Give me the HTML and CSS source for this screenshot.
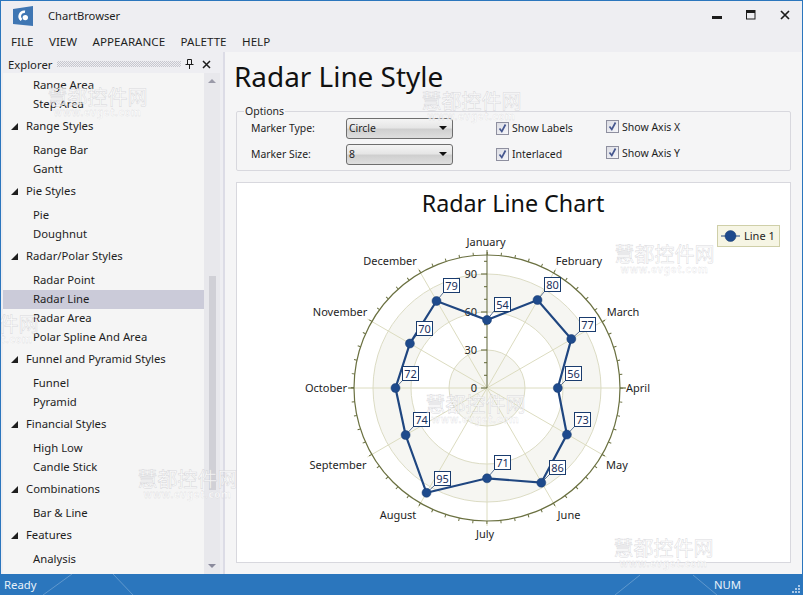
FILE: index.html
```html
<!DOCTYPE html>
<html lang="en">
<head>
    <meta charset="UTF-8">
    <title>ChartBrowser</title>
    <link rel="stylesheet" href="styles.css">
</head>
<body>
    <div class="window">
        <div class="titlebar">
            <svg class="app-icon" width="20" height="20" viewBox="0 0 20 20">
                <polygon points="0,3 20,0 20,20 0,18" fill="#3f76b3"/>
                <path d="M12 5.8 A4.6 4.6 0 0 0 8.5 14" fill="none" stroke="#fff" stroke-width="2.6"/>
                <circle cx="12.3" cy="11.6" r="2.7" fill="#fff"/>
            </svg>
            <span class="app-name">ChartBrowser</span>
            <div class="win-buttons">
                <svg width="10" height="10" viewBox="0 0 10 10"><rect x="0" y="6" width="10" height="3" fill="#1c1c1c"/></svg>
                <svg width="10" height="10" viewBox="0 0 10 10"><rect x="0.5" y="0.5" width="8.5" height="8.5" fill="none" stroke="#1c1c1c"/><rect x="0" y="0" width="9" height="3" fill="#1c1c1c"/></svg>
                <svg width="10" height="10" viewBox="0 0 10 10"><path d="M1 1 L9 9 M9 1 L1 9" stroke="#1c1c1c" stroke-width="1.7"/></svg>
            </div>
        </div>

        <div class="menubar">
            <span>FILE</span>
            <span>VIEW</span>
            <span>APPEARANCE</span>
            <span>PALETTE</span>
            <span>HELP</span>
        </div>

        <div class="content">
            <div class="sidebar">
                <div class="panel-head">
                    <span>Explorer</span>
                    <div class="grip"></div>
                    <svg width="9" height="10" viewBox="0 0 9 10"><path d="M2.5 .5 H6.5 V5.5 H2.5 Z M.5 5.5 H8.5 M4.5 5.5 V10" fill="none" stroke="#1c1c1c"/></svg>
                    <svg class="panel-close" width="9" height="9" viewBox="0 0 9 9"><path d="M1 1 L8 8 M8 1 L1 8" stroke="#1c1c1c" stroke-width="1.5"/></svg>
                </div>
                <div class="panel-body">
                    <ul class="tree">
                        <li>Range Area</li>
                        <li>Step Area</li>
                        <li class="group">Range Styles</li>
                        <li>Range Bar</li>
                        <li>Gantt</li>
                        <li class="group">Pie Styles</li>
                        <li>Pie</li>
                        <li>Doughnut</li>
                        <li class="group">Radar/Polar Styles</li>
                        <li>Radar Point</li>
                        <li class="selected">Radar Line</li>
                        <li>Radar Area</li>
                        <li>Polar Spline And Area</li>
                        <li class="group">Funnel and Pyramid Styles</li>
                        <li>Funnel</li>
                        <li>Pyramid</li>
                        <li class="group">Financial Styles</li>
                        <li>High Low</li>
                        <li>Candle Stick</li>
                        <li class="group">Combinations</li>
                        <li>Bar &amp; Line</li>
                        <li class="group">Features</li>
                        <li>Analysis</li>
                    </ul>
                    <div class="scrollbar">
                        <div class="arrow-up"></div>
                        <div class="thumb"></div>
                        <div class="arrow-down"></div>
                    </div>
                </div>
            </div>

            <div class="main">
                <h1>Radar Line Style</h1>
                <fieldset class="options">
                    <legend>Options</legend>
                    <div class="options-grid">
                        <label>Marker Type:</label>
                        <div class="combo">Circle</div>
                        <div class="check"><span class="box"><svg width="11" height="11" viewBox="0 0 11 11"><path d="M2.5 5.5 L4.8 8.5 L8.5 1.5" fill="none" stroke="#46578f" stroke-width="1.7"/></svg></span>Show Labels</div>
                        <div class="check raised"><span class="box"><svg width="11" height="11" viewBox="0 0 11 11"><path d="M2.5 5.5 L4.8 8.5 L8.5 1.5" fill="none" stroke="#46578f" stroke-width="1.7"/></svg></span>Show Axis X</div>
                        <label>Marker Size:</label>
                        <div class="combo">8</div>
                        <div class="check"><span class="box"><svg width="11" height="11" viewBox="0 0 11 11"><path d="M2.5 5.5 L4.8 8.5 L8.5 1.5" fill="none" stroke="#46578f" stroke-width="1.7"/></svg></span>Interlaced</div>
                        <div class="check raised"><span class="box"><svg width="11" height="11" viewBox="0 0 11 11"><path d="M2.5 5.5 L4.8 8.5 L8.5 1.5" fill="none" stroke="#46578f" stroke-width="1.7"/></svg></span>Show Axis Y</div>
                    </div>
                </fieldset>

                <div class="chart">
                    <svg class="radar" width="553" height="379" viewBox="237 183 553 379">
                        <text class="chart-title" x="513" y="212">Radar Line Chart</text>

                        <!-- legend -->
                        <rect class="legend-box" x="717.5" y="225.5" width="62" height="21"/>
                        <line class="series" x1="721" y1="236" x2="740" y2="236" stroke-width="1"/>
                        <circle class="marker" cx="730.5" cy="236" r="5.5"/>
                        <text class="axis-label" x="744" y="240" text-anchor="start">Line 1</text>

                        <!-- rings -->
                        <circle class="band" cx="487" cy="388" r="114"/>
                        <circle class="ring" cx="487" cy="388" r="76"/>
                        <circle class="band" cx="487" cy="388" r="38"/>

                        <!-- spokes -->
                        <g class="spoke">
                            <line x1="487" y1="388" x2="556" y2="268.5"/>
                            <line x1="487" y1="388" x2="606.5" y2="319"/>
                            <line x1="487" y1="388" x2="625" y2="388"/>
                            <line x1="487" y1="388" x2="606.5" y2="457"/>
                            <line x1="487" y1="388" x2="556" y2="507.5"/>
                            <line x1="487" y1="388" x2="487" y2="526"/>
                            <line x1="487" y1="388" x2="418" y2="507.5"/>
                            <line x1="487" y1="388" x2="367.5" y2="457"/>
                            <line x1="487" y1="388" x2="349" y2="388"/>
                            <line x1="487" y1="388" x2="367.5" y2="319"/>
                            <line x1="487" y1="388" x2="418" y2="268.5"/>
                        </g>

                        <!-- outer axis with ticks -->
                        <circle class="axis-ring" cx="487" cy="388" r="133"/>
                        <circle class="axis-ticks" cx="487" cy="388" r="134.5"/>
                        <g class="axis-y">
                            <line x1="487" y1="388" x2="487" y2="250"/>
                            <line x1="481" y1="388" x2="487" y2="388"/>
                            <line x1="484" y1="375.3" x2="487" y2="375.3"/>
                            <line x1="484" y1="362.7" x2="487" y2="362.7"/>
                            <line x1="481" y1="350" x2="487" y2="350"/>
                            <line x1="484" y1="337.3" x2="487" y2="337.3"/>
                            <line x1="484" y1="324.7" x2="487" y2="324.7"/>
                            <line x1="481" y1="312" x2="487" y2="312"/>
                            <line x1="484" y1="299.3" x2="487" y2="299.3"/>
                            <line x1="484" y1="286.7" x2="487" y2="286.7"/>
                            <line x1="481" y1="274" x2="487" y2="274"/>
                            <line x1="484" y1="261.3" x2="487" y2="261.3"/>
                            <line x1="620" y1="388" x2="626" y2="388"/>
                            <line x1="348" y1="388" x2="354" y2="388"/>
                        </g>

                        <g class="axis-y-labels">
                            <text x="477" y="392">0</text>
                            <text x="477" y="354">30</text>
                            <text x="477" y="316">60</text>
                            <text x="477" y="278">90</text>
                        </g>

                        <g class="month-labels">
                            <text x="486" y="246">January</text>
                            <text x="579" y="265">February</text>
                            <text x="623" y="316">March</text>
                            <text x="638" y="392">April</text>
                            <text x="617" y="469">May</text>
                            <text x="569" y="519">June</text>
                            <text x="485" y="538">July</text>
                            <text x="398" y="519">August</text>
                            <text x="338" y="469">September</text>
                            <text x="326" y="392">October</text>
                            <text x="340" y="316">November</text>
                            <text x="390" y="265">December</text>
                        </g>

                        <!-- series -->
                        <polygon class="series" stroke-width="2.2" points="487,320 537.5,300 571.3,339 557.8,388 566.9,434.6 541.3,482.7 487,478.3 426.5,492.8 405.6,435 395.5,388 409.9,343.5 436.5,301"/>
                        <g class="leaders">
                            <line x1="487" y1="320" x2="494" y2="311"/>
                            <line x1="537.5" y1="300" x2="544" y2="292"/>
                            <line x1="571.3" y1="339" x2="579" y2="332"/>
                            <line x1="557.8" y1="388" x2="565" y2="381"/>
                            <line x1="566.9" y1="434.6" x2="574" y2="427"/>
                            <line x1="541.3" y1="482.7" x2="549" y2="475"/>
                            <line x1="487" y1="478.3" x2="494" y2="470"/>
                            <line x1="426.5" y1="492.8" x2="434" y2="486"/>
                            <line x1="405.6" y1="435" x2="413" y2="427"/>
                            <line x1="395.5" y1="388" x2="402" y2="381"/>
                            <line x1="409.9" y1="343.5" x2="416" y2="336"/>
                            <line x1="436.5" y1="301" x2="443" y2="293"/>
                        </g>
                        <g class="markers">
                            <circle cx="487" cy="320" r="4.5"/>
                            <circle cx="537.5" cy="300" r="4.5"/>
                            <circle cx="571.3" cy="339" r="4.5"/>
                            <circle cx="557.8" cy="388" r="4.5"/>
                            <circle cx="566.9" cy="434.6" r="4.5"/>
                            <circle cx="541.3" cy="482.7" r="4.5"/>
                            <circle cx="487" cy="478.3" r="4.5"/>
                            <circle cx="426.5" cy="492.8" r="4.5"/>
                            <circle cx="405.6" cy="435" r="4.5"/>
                            <circle cx="395.5" cy="388" r="4.5"/>
                            <circle cx="409.9" cy="343.5" r="4.5"/>
                            <circle cx="436.5" cy="301" r="4.5"/>
                        </g>

                        <!-- data labels -->
                        <g class="tags">
                            <rect x="494.5" y="297.5" width="16" height="14"/><text x="502.5" y="308.5">54</text>
                            <rect x="544.5" y="277.5" width="16" height="14"/><text x="552.5" y="288.5">80</text>
                            <rect x="579.5" y="317.5" width="16" height="14"/><text x="587.5" y="328.5">77</text>
                            <rect x="565.5" y="366.5" width="16" height="14"/><text x="573.5" y="377.5">56</text>
                            <rect x="574.5" y="412.5" width="16" height="14"/><text x="582.5" y="423.5">73</text>
                            <rect x="549.5" y="460.5" width="16" height="14"/><text x="557.5" y="471.5">86</text>
                            <rect x="494.5" y="455.5" width="16" height="14"/><text x="502.5" y="466.5">71</text>
                            <rect x="434.5" y="471.5" width="16" height="14"/><text x="442.5" y="482.5">95</text>
                            <rect x="413.5" y="412.5" width="16" height="14"/><text x="421.5" y="423.5">74</text>
                            <rect x="402.5" y="366.5" width="16" height="14"/><text x="410.5" y="377.5">72</text>
                            <rect x="416.5" y="321.5" width="16" height="14"/><text x="424.5" y="332.5">70</text>
                            <rect x="443.5" y="278.5" width="16" height="14"/><text x="451.5" y="289.5">79</text>
                        </g>
                    </svg>
                </div>
            </div>
        </div>

        <div class="statusbar">
            <span>Ready</span>
            <span class="num">NUM</span>
            <svg class="size-grip" width="9" height="9" viewBox="0 0 9 9" fill="#a9c8e8">
                <rect x="7" y="1" width="2" height="2"/>
                <rect x="4" y="4" width="2" height="2"/><rect x="7" y="4" width="2" height="2"/>
                <rect x="1" y="7" width="2" height="2"/><rect x="4" y="7" width="2" height="2"/><rect x="7" y="7" width="2" height="2"/>
            </svg>
        </div>

        <!-- watermark stamped over the capture -->
        <svg class="streaks" width="803" height="595" viewBox="0 0 803 595">
            <path d="M72 574 L43 595 M113 574 L133 595 M640 575 L615 595 M693 575 L717 595"/>
        </svg>
        <div class="mark mark-a">慧都控件网<small>www.evget.com</small></div>
        <div class="mark mark-b">慧都控件网<small>www.evget.com</small></div>
        <div class="mark mark-c">慧都控件网<small>www.evget.com</small></div>
        <div class="mark mark-d">慧都控件网<small>www.evget.com</small></div>
        <div class="mark mark-e">慧都控件网<small>www.evget.com</small></div>
        <div class="mark mark-f">慧都控件网<small>www.evget.com</small></div>
        <div class="mark mark-g">慧都控件网<small>www.evget.com</small></div>
    </div>
</body>
</html>
```

FILE: styles.css
```css
* {
    box-sizing: border-box;
    margin: 0;
    padding: 0;
}

body {
    width: 803px;
    height: 595px;
    overflow: hidden;
    font-family: "Noto Sans", "Open Sans", sans-serif;
    font-size: 11.3px;
    color: #1e1e1e;
}

.window {
    position: relative;
    display: flex;
    flex-direction: column;
    height: 595px;
    overflow: hidden;
    background: #eeeef2;
    border: 1px solid #2b76bd;
    border-bottom: none;
}

.titlebar {
    display: flex;
    align-items: center;
    height: 29px;
    padding-left: 12px;
}

.app-icon {
    margin-top: 1px;
}

.app-name {
    margin-left: 15px;
    font-size: 11.2px;
}

.win-buttons {
    display: flex;
    gap: 24px;
    margin-left: auto;
    padding-right: 12px;
    margin-top: -2px;
}

.menubar {
    display: flex;
    gap: 15.5px;
    align-items: center;
    height: 22px;
    padding-left: 10px;
    font-size: 11.6px;
}

.content {
    display: flex;
    flex: 1;
    min-height: 0;
    padding-left: 2px;
}

/* explorer */
.sidebar {
    display: flex;
    flex-direction: column;
    width: 217px;
    flex-shrink: 0;
}

.panel-head {
    display: flex;
    align-items: center;
    height: 21px;
    padding: 3px 9px 0 5px;
}

.grip {
    flex: 1;
    height: 6px;
    margin: 0 4px 0 5px;
    background: repeating-conic-gradient(#c6c6ce 0 25%, transparent 0 50%) 0 0 / 2px 2px;
}

.panel-close {
    margin-left: 8px;
}

.panel-body {
    display: flex;
    flex: 1;
    min-height: 0;
    background: #f5f5f5;
}

.tree {
    flex: 1;
    list-style: none;
    padding-top: 3px;
    overflow: hidden;
}

.tree li {
    height: 19px;
    line-height: 18px;
    padding-left: 30px;
    white-space: nowrap;
}

.tree li.group {
    position: relative;
    margin: 3px 0 5px;
    padding-left: 23px;
}

.tree li.group::before {
    content: "";
    position: absolute;
    left: 8px;
    top: 6px;
    border-style: solid;
    border-width: 0 0 7px 7px;
    border-color: transparent transparent #1e1e1e transparent;
}

.tree li.selected {
    background: #cbcbd9;
}

.scrollbar {
    position: relative;
    width: 16px;
    background: #e8e8ec;
}

.thumb {
    position: absolute;
    left: 5px;
    top: 203px;
    width: 7px;
    height: 214px;
    background: #d0d0d6;
}

.arrow-up,
.arrow-down {
    position: absolute;
    left: 4px;
    border-style: solid;
    border-color: transparent;
}

.arrow-up {
    top: 6px;
    border-width: 0 4px 4px 4px;
    border-bottom-color: #9a9aa8;
}

.arrow-down {
    bottom: 6px;
    border-width: 4px 4px 0 4px;
    border-top-color: #8a8a9c;
}

/* right side */
.main {
    flex: 1;
    display: flex;
    flex-direction: column;
    margin-left: 3px;
    padding: 0 11px 11px 11px;
    border-left: 2px solid #dcdce6;
    background: #f5f5f6;
}

.main h1 {
    margin-left: -2px;
    height: 52px;
    padding-top: 5px;
    font-size: 27.9px;
    font-weight: 400;
    line-height: 38px;
    color: #111;
}

.options {
    height: 67px;
    border: 1px solid #d8d8de;
    border-radius: 2px;
}

.options legend {
    margin-left: 7px;
    padding: 0 1px;
    font-size: 10.5px;
    line-height: 14px;
}

.options-grid {
    display: grid;
    grid-template-columns: 95px 150px 110px 1fr;
    grid-auto-rows: 26px;
    align-items: center;
    margin-top: -3px;
    padding-left: 14px;
}

.options label {
    font-size: 10.4px;
}

.combo {
    position: relative;
    width: 107px;
    height: 21px;
    padding-left: 2px;
    line-height: 19px;
    font-size: 10.4px;
    border: 1px solid #6e6e6e;
    border-radius: 3px;
    background: linear-gradient(#f4f4f4, #e6e6e6 45%, #cfcfcf 55%, #dedede);
}

.combo::after {
    content: "";
    position: absolute;
    right: 5px;
    top: 7px;
    border-style: solid;
    border-width: 4px 4px 0 4px;
    border-color: #111 transparent transparent transparent;
}

.check {
    display: flex;
    align-items: center;
    gap: 3px;
    font-size: 10.5px;
}

.check.raised {
    margin-bottom: 3px;
}

.box {
    display: flex;
    align-items: center;
    justify-content: center;
    width: 13px;
    height: 13px;
    border: 1px solid #8e8f9f;
    background: linear-gradient(135deg, #dcdde4, #f6f6fa);
}

.chart {
    flex: 1;
    margin-top: 11px;
    background: #fff;
    border: 1px solid #d8d8de;
}

.radar {
    display: block;
}

.radar text {
    font-family: "Noto Sans", "Open Sans", sans-serif;
    font-size: 11px;
    fill: #1e1e1e;
}

.radar .chart-title {
    font-size: 23.3px;
    text-anchor: middle;
    fill: #111;
}

.legend-box {
    fill: #f6f5e4;
    stroke: #cfcfa8;
}

.band {
    fill: #f6f6f2;
    stroke: #dcdcc4;
}

.ring {
    fill: #fff;
    stroke: #dcdcc4;
}

.spoke line {
    stroke: #dcdcc0;
}

.axis-ring {
    fill: none;
    stroke: #6a7040;
    stroke-width: 1.2;
}

.axis-ticks {
    fill: none;
    stroke: #6a7040;
    stroke-width: 3;
    stroke-dasharray: 1 13.085;
    stroke-dashoffset: 0.5;
}

.axis-y line {
    stroke: #5f6536;
}

.axis-y-labels text {
    text-anchor: end;
}

.month-labels text {
    text-anchor: middle;
}

.series {
    fill: none;
    stroke: #1f4680;
}

.marker,
.markers circle {
    fill: #1e4a8c;
    stroke: #1a3c6e;
    stroke-width: 0.5;
}

.leaders line {
    stroke: #1a3c6e;
    stroke-width: 0.7;
}

.tags rect {
    fill: #fff;
    stroke: #1a3c6e;
}

.radar .tags text {
    text-anchor: middle;
    fill: #1a2f5c;
}

/* status bar */
.statusbar {
    display: flex;
    align-items: center;
    height: 21px;
    margin: 0 -1px;
    padding-left: 4px;
    background: #2b76bd;
    color: #e8f1fa;
}

.num {
    margin-left: auto;
    margin-right: 62px;
}

.size-grip {
    position: absolute;
    right: 2px;
    bottom: 2px;
}

/* watermark */
.streaks {
    position: absolute;
    left: -1px;
    top: -1px;
    pointer-events: none;
}

.streaks path {
    fill: none;
    stroke: rgba(255, 255, 255, 0.25);
}

.mark {
    position: absolute;
    display: flex;
    flex-direction: column;
    align-items: center;
    width: 101px;
    font-family: "Noto Sans CJK SC", sans-serif;
    font-size: 20px;
    line-height: 22px;
    color: rgba(255, 255, 255, 0.75);
    -webkit-text-stroke: 0.5px rgba(185, 185, 192, 0.55);
    pointer-events: none;
    white-space: nowrap;
}

.mark small {
    font-family: "Noto Sans", sans-serif;
    font-size: 10px;
    font-weight: 700;
    line-height: 9px;
    letter-spacing: 0.6px;
    -webkit-text-stroke: 0.3px rgba(185, 185, 192, 0.55);
}

.mark-a { left: 420px; top: 89px; }
.mark-b { left: 46px; top: 85px; }
.mark-c { left: 613px; top: 242px; }
.mark-d { left: -63px; top: 312px; }
.mark-e { left: 424px; top: 392px; }
.mark-f { left: 136px; top: 467px; }
.mark-g { left: 612px; top: 536px; }
```
